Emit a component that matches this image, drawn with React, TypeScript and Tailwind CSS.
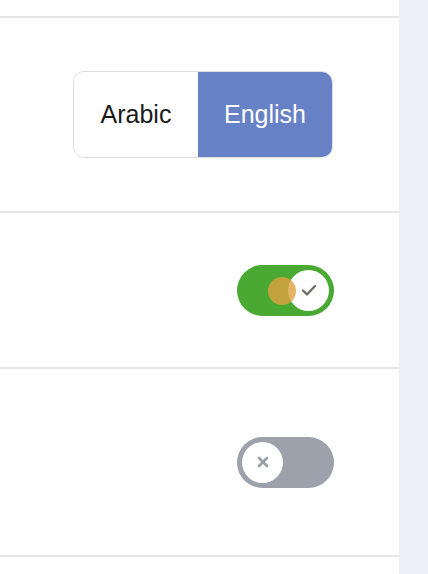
import React from "react";

export default function App() {
  return (
    <div className="flex w-[428px] h-[574px] bg-[#edf0f8]" style={{ fontFamily: '"Liberation Sans", Arial, sans-serif' }}>
      <div className="flex flex-col w-[399px] h-full bg-white">
        <div className="h-[18px] border-b-2 border-[#e6e6e6] shrink-0" />
        <div className="h-[195px] border-b-2 border-[#e6e6e6] shrink-0 flex items-center justify-end pr-[66px]">
          <div className="flex h-[87px] w-[260px] rounded-[11px] border border-[#dedede] overflow-hidden text-[25px]">
            <div className="w-[124px] flex items-center justify-center text-[#1a1a1a] bg-white">Arabic</div>
            <div className="flex-1 flex items-center justify-center text-white bg-[#6681c5]">English</div>
          </div>
        </div>
        <div className="h-[156px] border-b-2 border-[#e6e6e6] shrink-0 flex items-center justify-end pr-[65px]">
          <div className="relative w-[97px] h-[51px] rounded-full bg-[#4aa933]">
            <div className="absolute right-[5px] top-[5px] w-[41px] h-[41px] rounded-full bg-white flex items-center justify-center">
              <svg width="20" height="20" viewBox="0 0 20 20" fill="none">
                <path d="M4 10.5 L8 14.5 L16 6" stroke="#6b6f6b" strokeWidth="2.4" strokeLinecap="round" strokeLinejoin="round" />
              </svg>
            </div>
            <div className="absolute left-[31px] top-[12px] w-[28px] h-[28px] rounded-full bg-[#e0a040] opacity-80" />
          </div>
        </div>
        <div className="h-[188px] border-b-2 border-[#e6e6e6] shrink-0 flex items-center justify-end pr-[65px]">
          <div className="relative w-[97px] h-[51px] rounded-full bg-[#9ca1ab]">
            <div className="absolute left-[5px] top-[5px] w-[41px] h-[41px] rounded-full bg-white flex items-center justify-center">
              <svg width="18" height="18" viewBox="0 0 18 18" fill="none">
                <path d="M5 5 L13 13 M13 5 L5 13" stroke="#9a9ea5" strokeWidth="2.6" strokeLinecap="round" />
              </svg>
            </div>
          </div>
        </div>
        <div className="flex-1" />
      </div>
    </div>
  );
}
